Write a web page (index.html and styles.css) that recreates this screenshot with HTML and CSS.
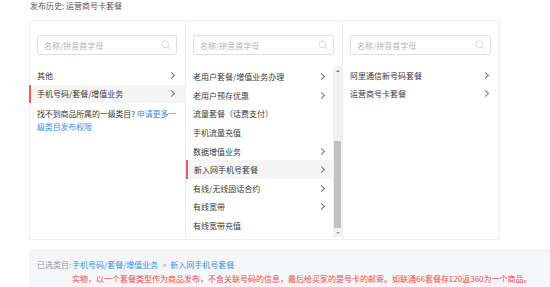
FILE: index.html
```html
<!DOCTYPE html>
<html lang="zh-CN">
<head>
  <meta charset="UTF-8">
  <title>发布宝贝 - 选择类目</title>
  <link rel="stylesheet" href="styles.css">
</head>
<body>
  <div class="history">发布历史: <span>运营商号卡套餐</span></div>

  <div class="picker">
    <!-- 一级类目 -->
    <div class="col">
      <div class="search">
        <span>名称/拼音首字母</span>
        <svg class="search-icon" width="10" height="10" viewBox="0 0 10 10"><circle cx="4.3" cy="4.3" r="3.5" fill="none" stroke="#d6d6d6" stroke-width="0.9"/><path d="M6.8 6.8 L9.4 9.4" stroke="#d6d6d6" stroke-width="0.9"/></svg>
      </div>
      <ul class="list">
        <li class="item">其他<i class="arrow"></i></li>
        <li class="item active">手机号码/套餐/增值业务<i class="arrow"></i></li>
      </ul>
      <p class="help">找不到商品所属的一级类目?<a>申请更多一级类目发布权限</a></p>
    </div>

    <!-- 二级类目 -->
    <div class="col">
      <div class="search">
        <span>名称/拼音首字母</span>
        <svg class="search-icon" width="10" height="10" viewBox="0 0 10 10"><circle cx="4.3" cy="4.3" r="3.5" fill="none" stroke="#d6d6d6" stroke-width="0.9"/><path d="M6.8 6.8 L9.4 9.4" stroke="#d6d6d6" stroke-width="0.9"/></svg>
      </div>
      <div class="scroll-wrap">
        <ul class="list list-scroll">
          <li class="item">老用户套餐/增值业务办理<i class="arrow"></i></li>
          <li class="item">老用户预存优惠<i class="arrow"></i></li>
          <li class="item">流量套餐（话费支付）</li>
          <li class="item">手机流量充值</li>
          <li class="item">数据增值业务<i class="arrow"></i></li>
          <li class="item active">新入网手机号套餐<i class="arrow"></i></li>
          <li class="item">有线/无线固话合约<i class="arrow"></i></li>
          <li class="item">有线宽带<i class="arrow"></i></li>
          <li class="item">有线宽带充值</li>
        </ul>
        <div class="scrollbar">
          <span class="btn up"></span>
          <div class="track"><div class="thumb"></div></div>
          <span class="btn down"></span>
        </div>
      </div>
    </div>

    <!-- 三级类目 -->
    <div class="col">
      <div class="search">
        <span>名称/拼音首字母</span>
        <svg class="search-icon" width="10" height="10" viewBox="0 0 10 10"><circle cx="4.3" cy="4.3" r="3.5" fill="none" stroke="#d6d6d6" stroke-width="0.9"/><path d="M6.8 6.8 L9.4 9.4" stroke="#d6d6d6" stroke-width="0.9"/></svg>
      </div>
      <ul class="list">
        <li class="item">阿里通信新号码套餐<i class="arrow"></i></li>
        <li class="item">运营商号卡套餐<i class="arrow"></i></li>
      </ul>
    </div>
  </div>

  <div class="selected">
    <span class="label">已选类目:</span>
    <div class="value">
      <div class="path"><a>手机号码/套餐/增值业务</a> <span class="sep">&gt;</span> <a>新入网手机号套餐</a></div>
      <div class="note">实物，以一个套餐类型作为商品发布，不含关联号码的信息，最后给买家的是号卡的邮寄。如联通66套餐存120返360为一个商品。</div>
    </div>
  </div>
</body>
</html>
```

FILE: styles.css
```css
* {
  margin: 0;
  padding: 0;
  box-sizing: border-box;
}

body {
  font-family: "Noto Sans CJK SC", "Noto Sans", sans-serif;
  font-size: 8px;
  color: #333;
  background: #fff;
  overflow: hidden;
}

ul {
  list-style: none;
}

a {
  color: #3d8ee8;
  cursor: pointer;
}

.history {
  padding: 0 0 0 30px;
  height: 20px;
  line-height: 11px;
  color: #555;
}

.picker {
  margin-left: 29px;
  width: 471px;
  height: 220px;
  border: 1px solid #efefef;
  display: grid;
  grid-template-columns: 156px 157px 156px;
}

.col {
  border-right: 1px solid #efefef;
  padding-top: 14px;
}

.col:last-child {
  border-right: none;
}

.search {
  margin: 0 8px 0 7px;
  height: 20px;
  border: 1px solid #dedede;
  border-radius: 3px;
  display: flex;
  align-items: center;
  justify-content: space-between;
  padding: 0 5px 0 6px;
  color: #b3b3b3;
}

.list {
  margin-top: 11px;
}

.item {
  height: 18.6px;
  display: flex;
  align-items: center;
  justify-content: space-between;
  padding: 0 10px 0 7px;
  white-space: nowrap;
  color: #3a3a3a;
}

.item.active {
  background: #f5f5f5;
  border-left: 2px solid #ee5a5a;
  margin-left: -1px;
  padding-left: 6px;
}

/* thin right chevron */
.arrow {
  width: 5px;
  height: 5px;
  border-top: 1px solid #777;
  border-right: 1px solid #777;
  transform: rotate(45deg);
  margin-right: 1px;
}

.help {
  margin-top: 4px;
  padding: 0 5px 0 7px;
  line-height: 13px;
  color: #3a3a3a;
  letter-spacing: -0.15px;
  word-break: break-all;
}

.help a {
  margin-left: 2px;
}

.scroll-wrap {
  display: flex;
  margin-top: 11px;
  height: 171px;
}

.list-scroll {
  flex: 1;
  margin-top: 1.5px;
  overflow: hidden;
}

.list-scroll .item {
  padding-right: 8px;
}

.list-scroll .item.active {
  margin-left: 0;
}

.scrollbar {
  width: 9px;
  background: #f1f1f1;
  display: flex;
  flex-direction: column;
}

.scrollbar .btn {
  height: 9px;
  display: flex;
  align-items: center;
  justify-content: center;
}

.scrollbar .btn::before {
  content: "";
  border-left: 2px solid transparent;
  border-right: 2px solid transparent;
}

.scrollbar .up::before {
  border-bottom: 2px solid #777;
}

.scrollbar .down::before {
  border-top: 2px solid #a3a3a3;
}

.track {
  flex: 1;
  padding: 66px 0 0 0;
}

.thumb {
  height: 87px;
  margin: 0 1px;
  background: #c1c1c1;
}

.selected {
  margin: 9px 0 0 29px;
  background: #f5f6f8;
  padding: 9px 8px 10px;
  display: flex;
  line-height: 14px;
  height: 50px;
}

.selected .label {
  color: #999;
  width: 35px;
  flex-shrink: 0;
}

.selected .sep {
  color: #999;
  margin: 0 2px;
}

.note {
  color: #f5454a;
  white-space: nowrap;
}
```
